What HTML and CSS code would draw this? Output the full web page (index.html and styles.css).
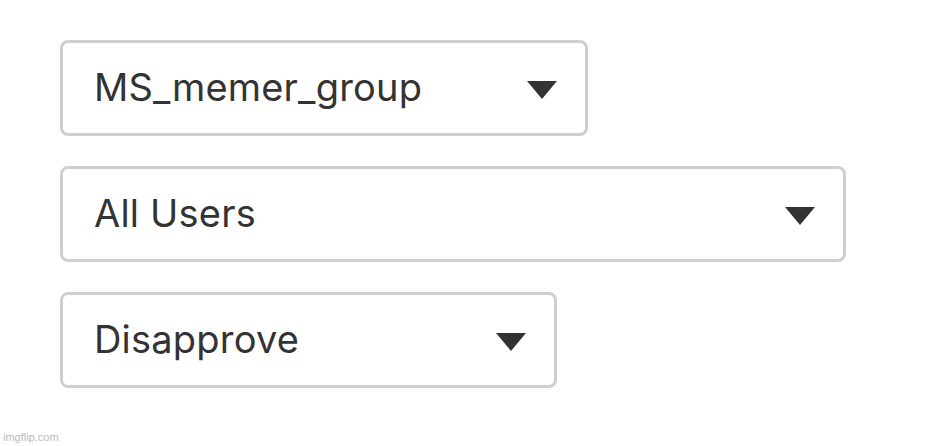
FILE: index.html
```html
<!DOCTYPE html>
<html lang="en">
<head>
  <meta charset="UTF-8" />
  <title>Selects</title>
  <link rel="stylesheet" href="styles.css">
</head>
<body>

<div class="filters">
  <div class="select select-group">
    <span class="select-label">MS_memer_group</span>
    <span class="caret"></span>
  </div>
  <div class="select select-users">
    <span class="select-label">All Users</span>
    <span class="caret"></span>
  </div>
  <div class="select select-action">
    <span class="select-label">Disapprove</span>
    <span class="caret"></span>
  </div>
</div>

<div class="watermark">imgflip.com</div>

</body>
</html>
```

FILE: styles.css
```css
body {
  margin: 0;
  background: #fff;
  font-family: Inter, "Liberation Sans", Arial, sans-serif;
  color: #333;
  height: 446px;
  position: relative;
}

.filters {
  display: flex;
  flex-direction: column;
  gap: 30px;
  padding: 40px 0 0 60px;
}

.select {
  box-sizing: border-box;
  height: 96px;
  border: 3px solid #cfcfcf;
  border-radius: 8px;
  display: flex;
  align-items: center;
  justify-content: space-between;
  padding: 0 28px 0 31px;
}

.select-group {
  width: 528px;
}

.select-users {
  width: 786px;
}

.select-action {
  width: 497px;
}

.select-label {
  font-size: 38px;
  letter-spacing: 0.2px;
  color: #333;
  margin-top: -2px;
}

.caret {
  width: 0;
  height: 0;
  border-left: 15px solid transparent;
  border-right: 15px solid transparent;
  border-top: 18px solid #333;
  margin-top: 4px;
}

.watermark {
  position: absolute;
  left: 3px;
  bottom: 3px;
  font-family: "Liberation Sans", Arial, sans-serif;
  font-size: 11px;
  color: #bbb;
}
```
